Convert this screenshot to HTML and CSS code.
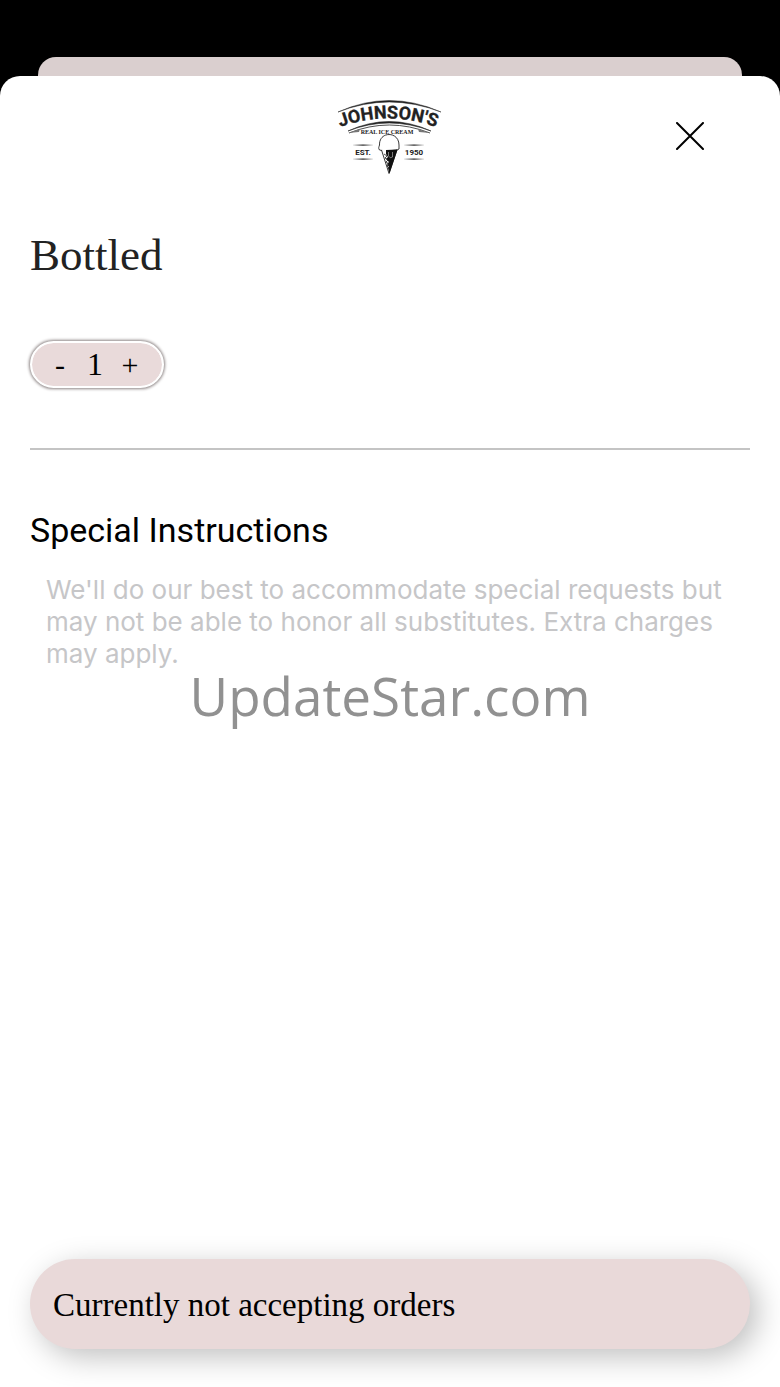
FILE: index.html
```html
<!DOCTYPE html>
<html lang="en">
<head>
    <meta charset="UTF-8">
    <meta name="viewport" content="width=device-width, initial-scale=1.0">
    <link rel="stylesheet" href="styles.css">
    <title>Bottled</title>
</head>
<body>

<div class="back-card"></div>

<main class="sheet">
    <header class="sheet-header">
        <svg class="logo" viewBox="0 0 140 95" role="img" aria-label="Johnson's Real Ice Cream">
            <defs>
                <path id="name-arc" d="M8 42 Q68 15 128 42"/>
                <linearGradient id="fade">
                    <stop offset="0" stop-color="#222" stop-opacity="0.1"/>
                    <stop offset="0.5" stop-color="#222"/>
                    <stop offset="1" stop-color="#222" stop-opacity="0.1"/>
                </linearGradient>
            </defs>
            <!-- arcs above and below the name -->
            <path d="M18 22 Q69 -1 121 22 Q69 2 18 22Z" fill="#222" stroke="#222" stroke-width="0.5"/>
            <path d="M28 41 Q69 22 111 41 Q69 25 28 41Z" fill="#222" stroke="#222" stroke-width="0.6"/>
            <path d="M29 43 Q69 27 110 43" fill="none" stroke="#222" stroke-width="0.8"/>
            <path d="M28 43 L40 39 L39 42Z M110 43 L98 39 L99 42Z" fill="#777"/>
            <text class="logo-name"><textPath href="#name-arc" startOffset="50%">JOHNSON'S</textPath></text>
            <text class="logo-tag" x="67" y="44">REAL ICE CREAM</text>
            <text class="logo-year" x="43" y="65">EST.</text>
            <text class="logo-year" x="94" y="65">1950</text>
            <!-- rules beside the cone -->
            <g fill="url(#fade)">
                <rect x="33" y="54.5" width="20" height="1.2"/>
                <rect x="33" y="68.5" width="20" height="1.2"/>
                <rect x="84" y="54.5" width="20" height="1.2"/>
                <rect x="84" y="68.5" width="20" height="1.2"/>
            </g>
            <!-- cone -->
            <path d="M59.500 60 C58 58 59 57 59.500 55 C59 41 79 41 79 55 L79 59 C77 61 62 61 59.500 60Z" fill="#fff" stroke="#222" stroke-width="0.9"/>
            <path d="M61.500 60 L69 83.500 L77 60" fill="#fff" stroke="#222" stroke-width="0.9"/>
            <path d="M66 60 L77.500 59.500 L69.500 83.500 L68 78 L69 77 L67 74 L69 72 L66 69 L68 67 L66 64Z" fill="#111"/>
            <path d="M68.500 62 V66 Q70 69 72.500 67 V62" fill="none" stroke="#aaa" stroke-width="0.7"/>
            <path d="M64 64 l3 2 l-2 2 l3 2 l-2 2 l3 2 l-2 2 l2 2" fill="none" stroke="#222" stroke-width="0.8"/>
        </svg>
        <button class="close-btn" type="button" aria-label="Close">
            <svg viewBox="0 0 28 28"><path d="M1 1 L27 27 M27 1 L1 27"/></svg>
        </button>
    </header>

    <h1>Bottled</h1>

    <div class="quantity">
        <button type="button" aria-label="Less" onclick="changeQuantity(-1)">-</button>
        <output id="quantity">1</output>
        <button type="button" aria-label="More" onclick="changeQuantity(1)">+</button>
    </div>

    <hr>

    <label for="instructions">Special Instructions</label>
    <textarea id="instructions" rows="3" placeholder="We'll do our best to accommodate special requests but may not be able to honor all substitutes. Extra charges may apply."></textarea>

    <button class="order-btn" type="button">Currently not accepting orders</button>
</main>

<div class="watermark">UpdateStar.com</div>

<script>
    const quantity = document.getElementById("quantity");

    function changeQuantity(step) {
        quantity.value = Math.max(1, Number(quantity.value) + step);
    }
</script>

</body>
</html>
```
FILE: styles.css
```css
* {
    box-sizing: border-box;
}

body {
    display: flex;
    flex-direction: column;
    min-height: 100vh;
    margin: 0;
    background: #000;
    color: #000;
    font-family: 'Liberation Serif', serif;
}

button {
    padding: 0;
    border: none;
    background: none;
    color: inherit;
    font-family: inherit;
    cursor: pointer;
}

.back-card {
    height: 19px;
    margin: 57px 38px 0;
    border-radius: 18px 18px 0 0;
    background: #dacfcf;
}

.sheet {
    flex: 1;
    display: flex;
    flex-direction: column;
    align-items: flex-start;
    padding: 14px 30px 38px;
    border-radius: 20px 20px 0 0;
    background: #fff;
}

.sheet-header {
    display: grid;
    grid-template-columns: 1fr 140px 1fr;
    align-items: center;
    width: 100%;
}

.logo {
    grid-column: 2;
    width: 140px;
    height: 95px;
}

.logo text {
    fill: #222;
    text-anchor: middle;
    font-family: Roboto, sans-serif;
    font-weight: bold;
}

.logo .logo-name {
    font-size: 18px;
    stroke: #222;
    stroke-width: 0.3px;
}

.logo .logo-tag {
    font-family: 'Liberation Serif', serif;
    font-size: 6px;
}

.logo .logo-year {
    font-size: 8px;
}

.close-btn {
    justify-self: end;
    width: 28px;
    height: 28px;
    margin: 0 46px 4px 0;
}

.close-btn svg {
    display: block;
    fill: none;
    stroke: #000;
    stroke-width: 2;
    stroke-linecap: round;
}

h1 {
    margin: 46px 0 62px;
    color: #222;
    font-size: 45px;
    font-weight: normal;
    line-height: 48px;
}

.quantity {
    display: flex;
    align-items: center;
    justify-content: space-between;
    width: 134px;
    height: 47px;
    padding: 0 22px 0 18px;
    border: 2px solid #fff;
    border-radius: 24px;
    background: #e9dada;
    background-clip: padding-box;
    box-shadow: 0 0 3px 1px #8c8484;
    font-size: 32px;
}

.quantity button {
    width: 20px;
    font-size: 30px;
}

hr {
    width: 100%;
    margin: 60px 0;
    border: none;
    border-top: 2px solid #c4c4c4;
}

label {
    font-family: Roboto, sans-serif;
    font-size: 34px;
    line-height: 40px;
}

textarea {
    width: 100%;
    margin-top: 24px;
    padding: 0 16px;
    border: none;
    background: none;
    font-family: Inter, sans-serif;
    font-size: 26px;
    line-height: 32px;
    resize: none;
}

textarea::placeholder {
    color: #c6c6c8;
    opacity: 1;
}

.order-btn {
    width: 100%;
    height: 90px;
    margin-top: auto;
    padding: 2px 23px 0;
    border-radius: 45px;
    background: #e9d9d9;
    box-shadow: 8px 8px 30px rgba(0, 0, 0, 0.25);
    font-size: 33px;
    text-align: left;
}

.watermark {
    position: fixed;
    inset: 0;
    display: flex;
    align-items: center;
    justify-content: center;
    padding-top: 4px;
    color: #919191;
    font-family: 'Open Sans', sans-serif;
    font-size: 53px;
    pointer-events: none;
}
```
